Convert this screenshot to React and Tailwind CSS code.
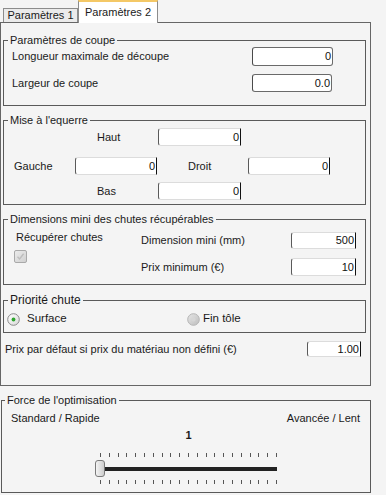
import React from "react";

function Field({ value, w, full = false, className = "" }) {
  const border = full
    ? "border border-[#6a6a6a] border-l-[#4a4a4a] rounded-[3px]"
    : "border border-[#dcdcdc] border-l-[#5a5a5a] border-r-[#111] rounded-l-[3px]";
  return (
    <div className={`${w} h-full bg-white ${border} flex items-center justify-end pr-[1px] text-[#111] ${className}`}>
      {value}
    </div>
  );
}

function Group({ title, className = "", legendClass = "", children }) {
  return (
    <fieldset className={`border border-[#5a5a5a] ${className}`}>
      <legend className={`ml-[4px] px-[2px] leading-[14px] ${legendClass}`}>{title}</legend>
      {children}
    </fieldset>
  );
}

function Radio({ checked }) {
  return (
    <svg width="13" height="13" viewBox="0 0 13 13">
      <defs>
        <linearGradient id={checked ? "rOn" : "rOff"} x1="0" y1="0" x2="1" y2="1">
          <stop offset="0" stopColor={checked ? "#ffffff" : "#e6e6e6"} />
          <stop offset="1" stopColor={checked ? "#d8d8d8" : "#bdbdbd"} />
        </linearGradient>
      </defs>
      <circle cx="6.5" cy="6.5" r="5.8" fill={`url(#${checked ? "rOn" : "rOff"})`} stroke={checked ? "#8a8a8a" : "#b4b4b4"} />
      {checked ? <circle cx="6.5" cy="6.5" r="1.9" fill="#2fa52f" /> : <circle cx="6.5" cy="6.5" r="2" fill="#d6d6d6" />}
    </svg>
  );
}

function Ticks() {
  return (
    <div className="flex justify-between h-[4px]">
      {Array.from({ length: 21 }).map((_, i) => (
        <span key={i} className="w-px h-full bg-[#555]" />
      ))}
    </div>
  );
}

export default function App() {
  return (
    <div className="w-[386px] h-[495px] bg-[#f4f4f4] overflow-hidden font-['Liberation_Sans',Arial,sans-serif] text-[11px] text-[#1a1a1a]">
      {/* tabs */}
      <div className="flex items-end h-[22px] pl-[3px]">
        <div className="h-[14px] w-[75px] border border-b-0 border-[#8c8c8c] bg-[#ebebeb] flex items-center justify-center leading-none">
          Paramètres 1
        </div>
        <div className="relative z-10 -mb-px h-[23px] w-[80px] bg-white border-t-2 border-t-[#f4c866] border-x border-[#8c8c8c] flex items-start justify-center pt-[5px] leading-none">
          Paramètres 2
        </div>
      </div>

      {/* tab panel */}
      <div className="w-[371px] h-[364px] border border-[#666] pl-[2px] flex flex-col">
        <Group title="Paramètres de coupe" className="mt-[10px] w-[363px] h-[73px]">
          <div className="flex items-center h-[19px]">
            <span className="pl-[8px]">Longueur maximale de découpe</span>
            <Field value="0" w="w-[81px]" full className="ml-auto mr-[32px]" />
          </div>
          <div className="flex items-center h-[18px] mt-[8px]">
            <span className="pl-[8px]">Largeur de coupe</span>
            <Field value="0.0" w="w-[80px]" full className="ml-auto mr-[33px]" />
          </div>
        </Group>

        <Group title="Mise à l'equerre" className="mt-[7px] w-[363px] h-[92px]">
          <div className="flex items-center h-[18px] mt-px">
            <span className="ml-[93px] w-[61px]">Haut</span>
            <Field value="0" w="w-[83px]" />
          </div>
          <div className="flex items-center h-[18px] mt-[11px]">
            <span className="ml-[10px] w-[61px]">Gauche</span>
            <Field value="0" w="w-[82px]" />
            <span className="ml-[31px] w-[60px]">Droit</span>
            <Field value="0" w="w-[82px]" />
          </div>
          <div className="flex items-center h-[18px] mt-[7px]">
            <span className="ml-[93px] w-[61px]">Bas</span>
            <Field value="0" w="w-[83px]" />
          </div>
        </Group>

        <Group title="Dimensions mini des chutes récupérables" className="mt-[7px] w-[363px] h-[73px]">
          <div className="flex">
            <div className="w-[137px] pl-[12px] pt-[4px] flex flex-col">
              <span className="leading-[14px]">Récupérer chutes</span>
              <svg className="mt-[6px] -ml-[2px]" width="13" height="13" viewBox="0 0 13 13">
                <defs>
                  <linearGradient id="cb" x1="0" y1="0" x2="1" y2="1">
                    <stop offset="0" stopColor="#ececec" />
                    <stop offset="1" stopColor="#cfcfcf" />
                  </linearGradient>
                </defs>
                <rect x="0.5" y="0.5" width="12" height="12" rx="1.5" fill="url(#cb)" stroke="#a9a9a9" />
                <path d="M3.5 6.8 L5.6 8.9 L9.6 3.8" fill="none" stroke="#bdbdbd" strokeWidth="1.4" />
              </svg>
            </div>
            <div className="flex flex-col">
              <div className="flex items-center h-[17px] mt-[6px]">
                <span className="w-[150px]">Dimension mini (mm)</span>
                <Field value="500" w="w-[65px]" />
              </div>
              <div className="flex items-center h-[18px] mt-[9px]">
                <span className="w-[150px]">Prix minimum (€)</span>
                <Field value="10" w="w-[65px]" />
              </div>
            </div>
          </div>
        </Group>

        <Group title="Priorité chute" className="mt-[8px] w-[363px] h-[40px]" legendClass="text-[12px]">
          <div className="flex items-center h-[14px] mt-[5px] text-[11.5px]">
            <div className="w-[183px] flex items-center gap-[7px] pl-[3px]">
              <Radio checked />
              <span>Surface</span>
            </div>
            <div className="flex items-center gap-[3px]">
              <Radio />
              <span>Fin tôle</span>
            </div>
          </div>
        </Group>

        <div className="flex items-center h-[16px] mt-[8px]">
          <span className="pl-[2px]">Prix par défaut si prix du matériau non défini (€)</span>
          <Field value="1.00" w="w-[54px]" className="ml-auto mr-[9px]" />
        </div>
      </div>

      {/* optimisation */}
      <fieldset className="mt-[7px] ml-px w-[370px] h-[100px] border border-[#5a5a5a]">
        <legend className="ml-[3px] px-[2px] leading-[14px]">Force de l'optimisation</legend>
        <div className="flex justify-between mt-[4px] pl-[9px] pr-[10px] leading-[14px]">
          <span>Standard / Rapide</span>
          <span>Avancée / Lent</span>
        </div>
        <div className="ml-[98px] w-[177px]">
          <div className="mt-[3px] text-center font-bold leading-[14px]">1</div>
          <div className="mt-[11px]">
            <Ticks />
          </div>
          <div className="relative h-[17px] mt-[3px] flex items-center">
            <div className="w-full h-[4px] bg-[#222]" />
            <div className="absolute left-[-5px] top-0 w-[10px] h-[17px] rounded-[3px] border border-[#7a7a7a] bg-gradient-to-r from-[#f4f4f4] to-[#cdcdcd]" />
          </div>
          <div className="mt-[3px]">
            <Ticks />
          </div>
        </div>
      </fieldset>
    </div>
  );
}
